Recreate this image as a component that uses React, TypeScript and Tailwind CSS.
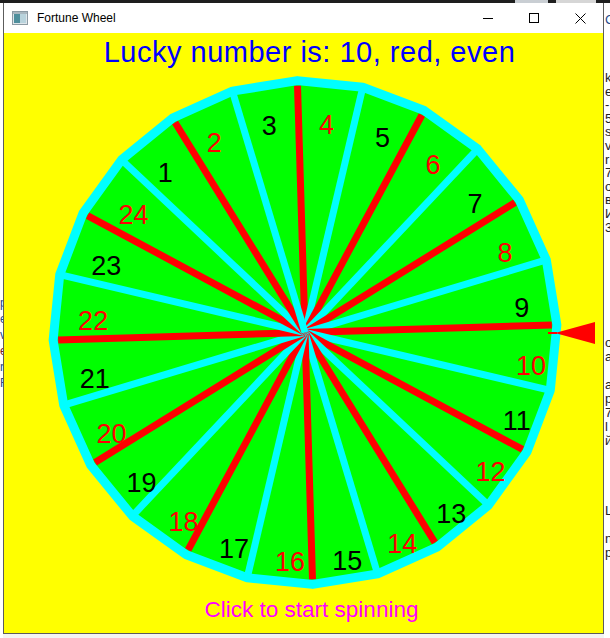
import React from 'react';

// wheel geometry, in page pixels
const CX = 305;
const CY = 332.5;
const R = 252;
const BASE = -91.74; // angle of the 3|4 boundary
const TX = 312;
const TY = 343.5;
const TR = 220;

const rad = (d: number) => (d * Math.PI) / 180;
const at = (cx: number, cy: number, r: number, deg: number): [number, number] => [
  cx + r * Math.cos(rad(deg)),
  cy + r * Math.sin(rad(deg)),
];

function Wheel() {
  const verts = Array.from({ length: 24 }, (_, k) => at(CX, CY, R, BASE + 15 * k));
  const poly = verts.map(([x, y]) => `${x},${y}`).join(' ');
  const numbers = Array.from({ length: 24 }, (_, i) => i + 1);

  return (
    <svg width={599} height={517} viewBox="4 75 599 517" className="block">
      <polygon points={poly} fill="#00ff00" />
      {verts.map(([x, y], k) =>
        k % 2 === 0 ? (
          <line key={k} x1={CX} y1={CY} x2={CX + (x - CX) * 0.98} y2={CY + (y - CY) * 0.98} stroke="#ff0000" strokeWidth={7} />
        ) : (
          <line key={k} x1={CX} y1={CY} x2={x} y2={y} stroke="#00ffff" strokeWidth={7} />
        )
      )}
      <polygon points={poly} fill="none" stroke="#00ffff" strokeWidth={9} strokeLinejoin="round" />
      {numbers.map((n) => {
        const [x, y] = at(TX, TY, TR, BASE + 15 * n - 52.5);
        return (
          <text
            key={n}
            x={x - 15}
            y={y}
            dominantBaseline="central"
            fontFamily="'Liberation Sans', Arial, sans-serif"
            fontSize={27}
            fill={n % 2 === 0 ? '#ff0000' : '#000000'}
          >
            {n}
          </text>
        );
      })}
      {/* pointer */}
      <line x1={548} y1={333} x2={557} y2={333} stroke="#ff0000" strokeWidth={2} />
      <polygon points="555,333 595,322 595,344" fill="#ff0000" />
    </svg>
  );
}

function AppIcon() {
  return (
    <svg width={16} height={14} viewBox="0 0 16 14">
      <rect x={0.5} y={0.5} width={15} height={13} fill="#dfe6ea" stroke="#8c9aa3" />
      <rect x={2} y={3} width={6} height={9} fill="#4f8f9c" />
      <rect x={8} y={3} width={6} height={9} fill="#b9d3dc" />
      <rect x={1} y={1} width={14} height={2} fill="#a9b7bf" />
    </svg>
  );
}

function Controls() {
  return (
    <div className="flex h-full">
      <div className="w-[46px] h-full flex items-center justify-center">
        <svg width={10} height={10} viewBox="0 0 10 10">
          <line x1={0} y1={5.5} x2={10} y2={5.5} stroke="#000" strokeWidth={1} />
        </svg>
      </div>
      <div className="w-[46px] h-full flex items-center justify-center">
        <svg width={10} height={10} viewBox="0 0 10 10">
          <rect x={0.5} y={0.5} width={9} height={9} fill="none" stroke="#000" strokeWidth={1} />
        </svg>
      </div>
      <div className="w-[46px] h-full flex items-center justify-center">
        <svg width={11} height={11} viewBox="0 0 11 11">
          <path d="M0.5 0.5 L10.5 10.5 M10.5 0.5 L0.5 10.5" stroke="#000" strokeWidth={1} />
        </svg>
      </div>
    </div>
  );
}

const rightTop = ['k', 'es', '-', '54', 'se', 'v', 'r', '73', 'o', 'в', 'И', '3'];
const rightMid = ['ol', 'at', '', 'a', 'р', '7', 'l', 'й-'];
const rightLow = ['L', '', 'n', 'р-'];

export default function App() {
  return (
    <div className="w-[610px] h-[638px] overflow-hidden bg-[#f4f4f4] flex flex-col" style={{ fontFamily: "'Liberation Sans', Arial, sans-serif" }}>
      <div className="h-[3px] bg-[#1e1e1e] shrink-0 flex">
        <div className="ml-[515px] w-[33px] bg-[#c9ced3]" />
        <div className="ml-[8px] w-[40px] bg-[#d6d6d6]" />
      </div>
      <div className="flex flex-1">
        {/* left desktop sliver */}
        <div className="w-[3px] bg-white flex flex-col pt-[292px] text-[12px] leading-[16px] text-[#2a4a8a] overflow-hidden">
          <span>p</span>
          <span>e</span>
          <span>v</span>
          <span className="text-[#7a2020]">e</span>
          <span>r</span>
          <span>F</span>
        </div>

        {/* window */}
        <div className="w-[601px] h-[631px] border-x border-b border-[#5c5c5c] flex flex-col bg-white shrink-0">
          <div className="h-[30px] bg-white flex items-center">
            <div className="ml-[8px] mr-[9px] flex items-center">
              <AppIcon />
            </div>
            <span className="text-[12px] text-black flex-1">Fortune Wheel</span>
            <Controls />
          </div>
          <div className="h-[600px] bg-[#ffff00] flex flex-col">
            <div className="h-[42px] pt-[5px] pl-[12px] text-center text-[29px] leading-none tracking-[0.5px] text-[#0000ff]">
              Lucky number is: 10, red, even
            </div>
            <Wheel />
            <div className="h-[41px] pt-[7px] pl-[16px] text-center text-[22.5px] leading-none text-[#ff00ff]">
              Click to start spinning
            </div>
          </div>
        </div>

        {/* right desktop sliver */}
        <div className="flex-1 bg-white overflow-hidden flex flex-col pl-[1px] text-[13px] leading-[14px] text-[#222]">
          <span className="h-[14px] mt-[10px] text-[#2a4a8a]">C</span>
          <div className="flex flex-col pt-[44px]">
            {rightTop.map((t, i) => (
              <span key={i} className="h-[13.6px] whitespace-nowrap">{t}</span>
            ))}
          </div>
          <div className="flex flex-col pt-[102px]">
            {rightMid.map((t, i) => (
              <span key={i} className="h-[14px] whitespace-nowrap">{t}</span>
            ))}
          </div>
          <div className="flex flex-col pt-[56px]">
            {rightLow.map((t, i) => (
              <span key={i} className="h-[14px] whitespace-nowrap">{t}</span>
            ))}
          </div>
        </div>
      </div>
    </div>
  );
}
